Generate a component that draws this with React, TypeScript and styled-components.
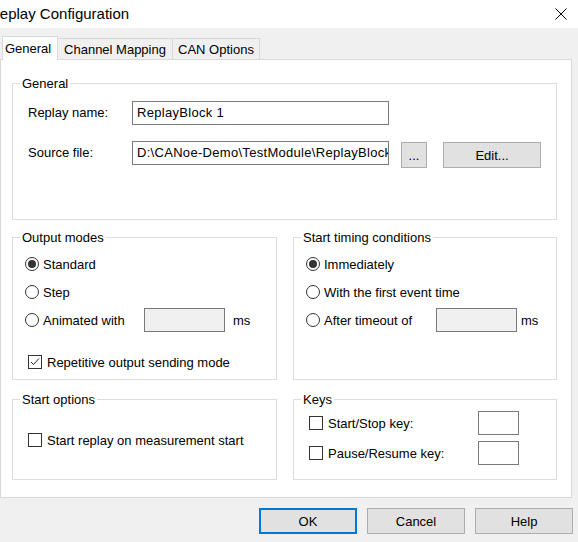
import styled, { createGlobalStyle } from 'styled-components';

const GlobalStyle = createGlobalStyle`
  html, body {
    margin: 0;
    padding: 0;
  }
  body {
    width: 578px;
    height: 542px;
    overflow: hidden;
    background: #f0f0f0;
    font-family: "Liberation Sans", Arial, sans-serif;
    font-size: 13px;
    color: #000000;
  }
`;

const Window = styled.div`
  width: 578px;
  height: 542px;
  display: flex;
  flex-direction: column;
  background: #f0f0f0;
  overflow: hidden;
`;

const TitleBar = styled.div`
  height: 28px;
  flex: none;
  background: #ffffff;
  display: flex;
  align-items: center;
  justify-content: space-between;
  padding-right: 11px;
  box-sizing: border-box;
`;

const Title = styled.span`
  margin-left: -11px;
  font-size: 15px;
  line-height: 18px;
  white-space: nowrap;
`;

const TabStrip = styled.div`
  height: 31px;
  flex: none;
  display: flex;
  align-items: flex-end;
  padding-left: 2px;
  box-sizing: border-box;
`;

const Tab = styled.div<{ $active?: boolean; $width: number }>`
  width: ${(p) => p.$width}px;
  height: ${(p) => (p.$active ? 24 : 21)}px;
  margin-bottom: ${(p) => (p.$active ? -1 : 0)}px;
  box-sizing: border-box;
  background: ${(p) => (p.$active ? '#ffffff' : '#f0f0f0')};
  border-top: 1px solid #d9d9d9;
  border-right: 1px solid #d9d9d9;
  border-left: ${(p) => (p.$active ? '1px solid #d9d9d9' : 'none')};
  padding-right: ${(p) => (p.$active ? 4 : 0)}px;
  display: flex;
  align-items: center;
  justify-content: center;
  white-space: nowrap;
  position: relative;
  z-index: ${(p) => (p.$active ? 1 : 0)};
`;

const Panel = styled.div`
  width: 572px;
  height: 439px;
  flex: none;
  box-sizing: border-box;
  background: #ffffff;
  border: 1px solid #d9d9d9;
  padding: 16px 0 0 11px;
  display: grid;
  grid-template-columns: 265px 264px;
  grid-template-rows: 144px 152px 88px;
  column-gap: 16px;
  row-gap: 10px;
  align-items: start;
`;

const GroupBox = styled.fieldset<{ $height: number; $wide?: boolean }>`
  margin: 0;
  padding: 0;
  min-width: 0;
  height: ${(p) => p.$height}px;
  box-sizing: border-box;
  border: 1px solid #dcdcdc;
  grid-column: ${(p) => (p.$wide ? '1 / -1' : 'auto')};
`;

const GroupTitle = styled.legend`
  margin-left: 7px;
  padding: 0 2px;
  font-size: 13px;
  line-height: 15px;
`;

const FormRows = styled.div`
  display: flex;
  flex-direction: column;
  gap: 16px;
  padding: 10px 0 0 15px;
`;

const FormRow = styled.div`
  display: flex;
  align-items: flex-start;
`;

const FieldLabel = styled.span<{ $width: number }>`
  width: ${(p) => p.$width}px;
  flex: none;
  line-height: 24px;
  white-space: nowrap;
`;

const TextField = styled.div<{ $width: number; $disabled?: boolean }>`
  width: ${(p) => p.$width}px;
  height: 24px;
  flex: none;
  box-sizing: border-box;
  border: 1px solid #7a7a7a;
  background: ${(p) => (p.$disabled ? '#f0f0f0' : '#ffffff')};
  padding: 0 4px;
  line-height: 22px;
  letter-spacing: 0.3px;
  white-space: nowrap;
  overflow: hidden;
`;

const PushButton = styled.button<{ $width: number; $offset?: number; $default?: boolean }>`
  width: ${(p) => p.$width}px;
  height: 26px;
  flex: none;
  margin: ${(p) => (p.$offset !== undefined ? '1px 0 0 ' + p.$offset + 'px' : '0')};
  padding: 0;
  box-sizing: border-box;
  background: #e1e1e1;
  border: ${(p) => (p.$default ? '2px solid #0078d7' : '1px solid #adadad')};
  font-family: "Liberation Sans", Arial, sans-serif;
  font-size: 13px;
  color: #000000;
`;

const OptionList = styled.div<{ $top: number; $gap: number }>`
  display: flex;
  flex-direction: column;
  gap: ${(p) => p.$gap}px;
  padding: ${(p) => p.$top}px 0 0 12px;
`;

const OptionRow = styled.div<{ $extra?: number }>`
  display: flex;
  align-items: center;
  height: 24px;
  margin-top: ${(p) => p.$extra ?? 0}px;
  white-space: nowrap;
`;

const RadioCircle = styled.span<{ $checked?: boolean }>`
  width: 14px;
  height: 14px;
  flex: none;
  box-sizing: border-box;
  border-radius: 50%;
  border: 1px solid #333333;
  background: #ffffff;
  margin-right: 4px;
  display: flex;
  align-items: center;
  justify-content: center;

  &::after {
    content: '';
    width: 8px;
    height: 8px;
    border-radius: 50%;
    background: ${(p) => (p.$checked ? '#333333' : 'transparent')};
  }
`;

const CheckSquare = styled.span`
  width: 14px;
  height: 14px;
  flex: none;
  box-sizing: border-box;
  border: 1px solid #333333;
  background: #ffffff;
  margin: 0 5px 0 3px;
  display: flex;
  align-items: center;
  justify-content: center;
`;

const OptionText = styled.span<{ $width?: number }>`
  width: ${(p) => (p.$width ? p.$width + 'px' : 'auto')};
  flex: none;
`;

const Unit = styled.span<{ $offset: number }>`
  margin-left: ${(p) => p.$offset}px;
`;

const Footer = styled.div`
  flex: 1;
  display: flex;
  justify-content: flex-end;
  align-items: flex-start;
  gap: 10px;
  padding: 10px 5px 0 0;
`;

const CloseIcon = () => (
  <svg width="12" height="12" viewBox="0 0 12 12">
    <path d="M0.5 0.5 L11.5 11.5 M11.5 0.5 L0.5 11.5" stroke="#000" strokeWidth="1" fill="none" />
  </svg>
);

const Radio = ({ checked, children, width }: { checked?: boolean; children: string; width?: number }) => (
  <>
    <RadioCircle $checked={checked} />
    <OptionText $width={width}>{children}</OptionText>
  </>
);

const Check = ({ checked, children, width }: { checked?: boolean; children: string; width?: number }) => (
  <>
    <CheckSquare>
      {checked && (
        <svg width="12" height="12" viewBox="0 0 12 12">
          <path d="M2 6 L4.5 8.5 L10 2.5" stroke="#222" strokeWidth="1" fill="none" />
        </svg>
      )}
    </CheckSquare>
    <OptionText $width={width}>{children}</OptionText>
  </>
);

const App = () => {
  return (
    <Window>
      <GlobalStyle />
      <TitleBar>
        <Title>Replay Configuration</Title>
        <CloseIcon />
      </TitleBar>
      <TabStrip>
        <Tab $active $width={56}>General</Tab>
        <Tab $width={115}>Channel Mapping</Tab>
        <Tab $width={87}>CAN Options</Tab>
      </TabStrip>
      <Panel>
        <GroupBox $wide $height={144}>
          <GroupTitle>General</GroupTitle>
          <FormRows>
            <FormRow>
              <FieldLabel $width={104}>Replay name:</FieldLabel>
              <TextField $width={257}>ReplayBlock 1</TextField>
            </FormRow>
            <FormRow>
              <FieldLabel $width={104}>Source file:</FieldLabel>
              <TextField $width={257}>{'D:\\CANoe-Demo\\TestModule\\ReplayBlock'}</TextField>
              <PushButton $width={26} $offset={12}>...</PushButton>
              <PushButton $width={98} $offset={16}>Edit...</PushButton>
            </FormRow>
          </FormRows>
        </GroupBox>

        <GroupBox $height={150}>
          <GroupTitle>Output modes</GroupTitle>
          <OptionList $top={7} $gap={4}>
            <OptionRow>
              <Radio checked>Standard</Radio>
            </OptionRow>
            <OptionRow>
              <Radio>Step</Radio>
            </OptionRow>
            <OptionRow>
              <Radio width={101}>Animated with</Radio>
              <TextField $width={81} $disabled />
              <Unit $offset={8}>ms</Unit>
            </OptionRow>
            <OptionRow $extra={14}>
              <Check checked>Repetitive output sending mode</Check>
            </OptionRow>
          </OptionList>
        </GroupBox>

        <GroupBox $height={150}>
          <GroupTitle>Start timing conditions</GroupTitle>
          <OptionList $top={7} $gap={4}>
            <OptionRow>
              <Radio checked>Immediately</Radio>
            </OptionRow>
            <OptionRow>
              <Radio>With the first event time</Radio>
            </OptionRow>
            <OptionRow>
              <Radio width={112}>After timeout of</Radio>
              <TextField $width={81} $disabled />
              <Unit $offset={4}>ms</Unit>
            </OptionRow>
          </OptionList>
        </GroupBox>

        <GroupBox $height={88}>
          <GroupTitle>Start options</GroupTitle>
          <OptionList $top={21} $gap={6}>
            <OptionRow>
              <Check>Start replay on measurement start</Check>
            </OptionRow>
          </OptionList>
        </GroupBox>

        <GroupBox $height={88}>
          <GroupTitle>Keys</GroupTitle>
          <OptionList $top={4} $gap={6}>
            <OptionRow>
              <Check width={150}>Start/Stop key:</Check>
              <TextField $width={41} />
            </OptionRow>
            <OptionRow>
              <Check width={150}>Pause/Resume key:</Check>
              <TextField $width={41} />
            </OptionRow>
          </OptionList>
        </GroupBox>
      </Panel>
      <Footer>
        <PushButton $width={98} $default>OK</PushButton>
        <PushButton $width={98}>Cancel</PushButton>
        <PushButton $width={98}>Help</PushButton>
      </Footer>
    </Window>
  );
};

export default App;
